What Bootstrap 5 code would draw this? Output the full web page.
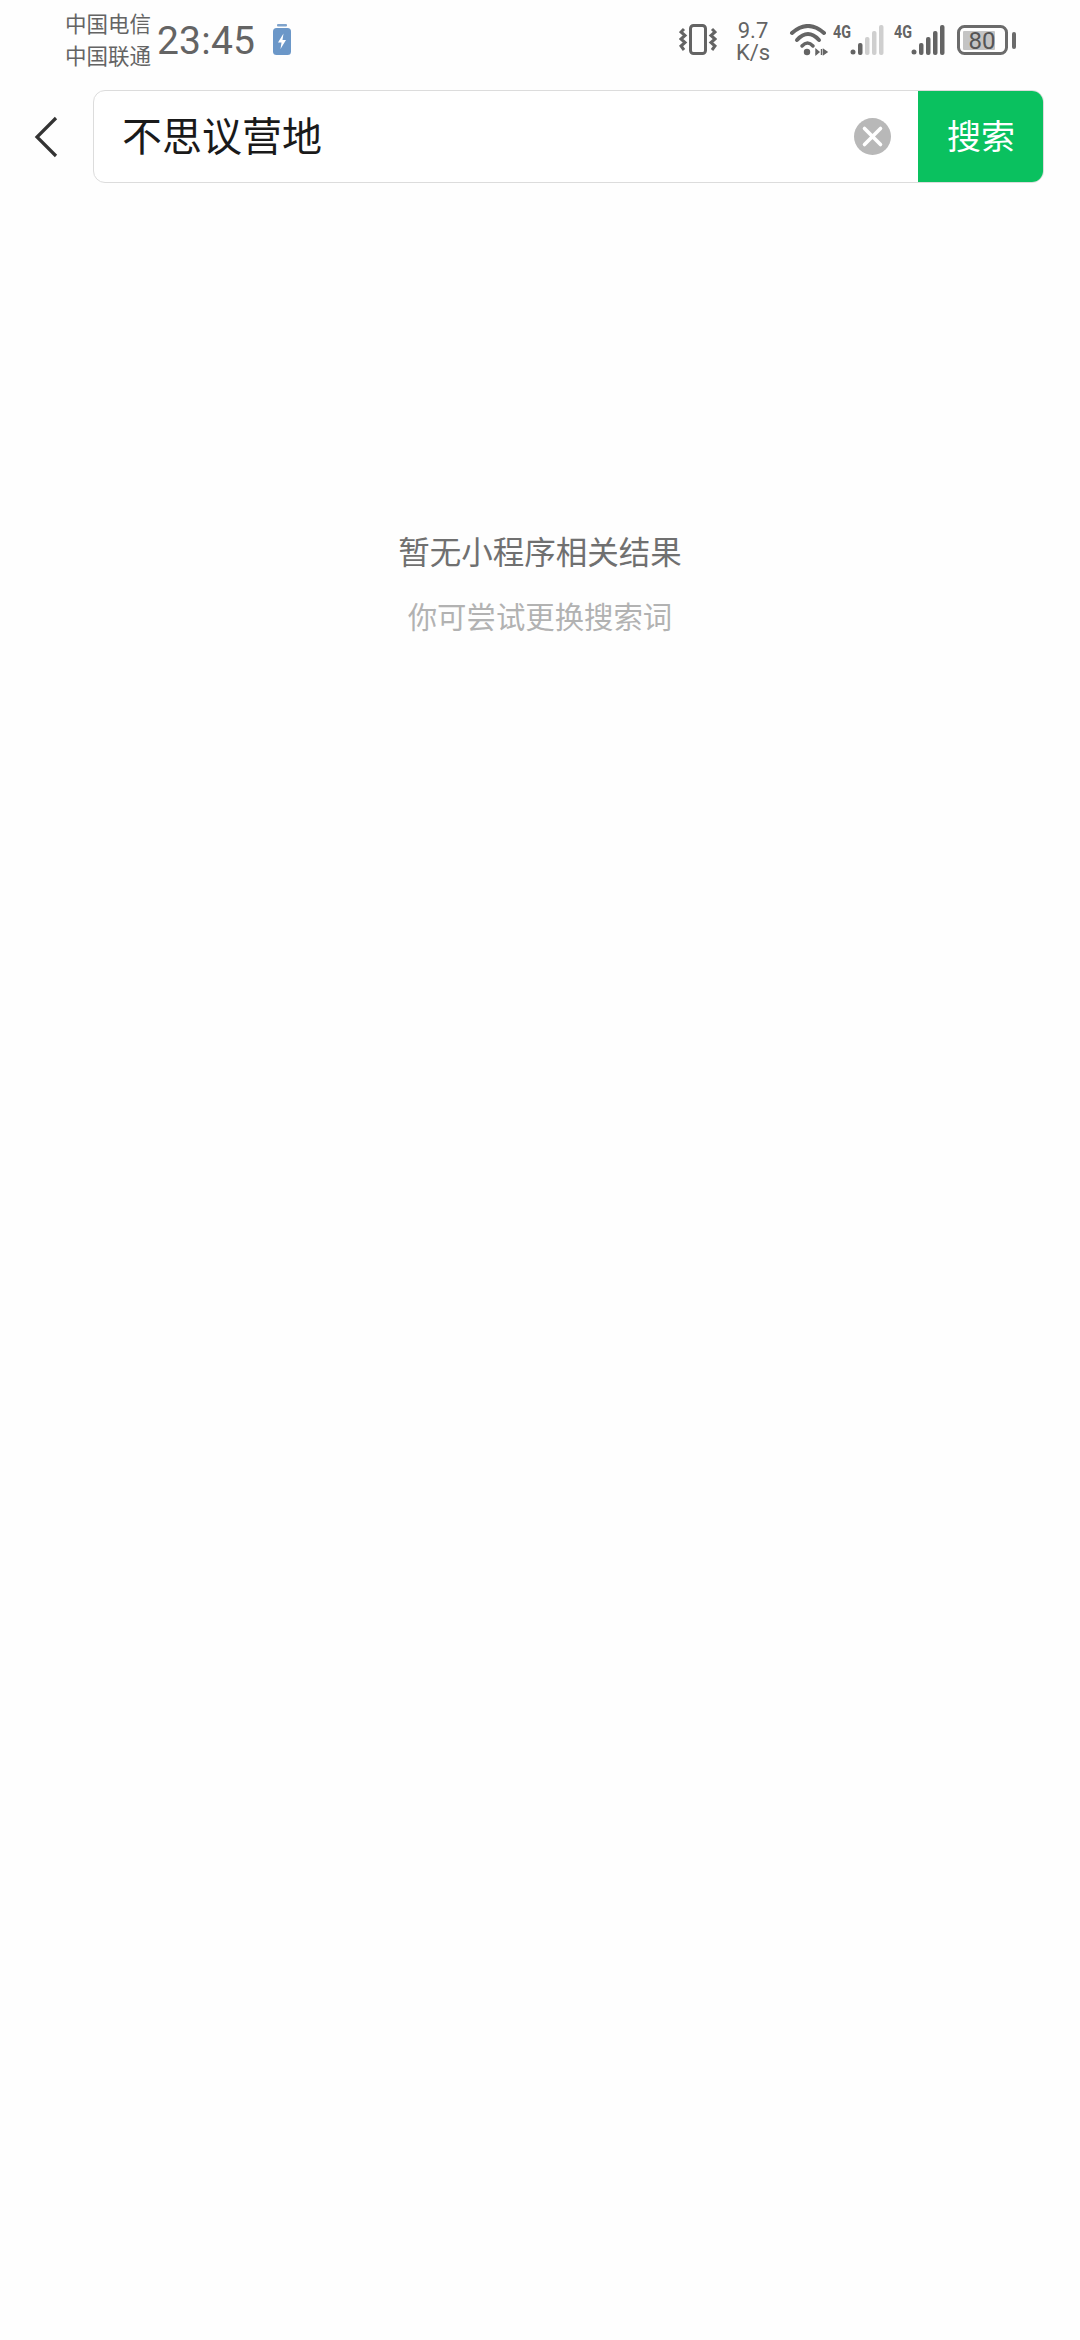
<!DOCTYPE html>
<html lang="zh-CN">
<head>
  <meta charset="UTF-8">
  <title>搜索</title>
  <link href="https://cdn.jsdelivr.net/npm/bootstrap@5.3.3/dist/css/bootstrap.min.css" rel="stylesheet">
  <style>
    body { background: #fefefe; width: 1080px; height: 2340px; overflow: hidden; font-family: Roboto, "Noto Sans CJK SC", sans-serif; }
    .status-bar { height: 80px; padding-left: 65px; padding-right: 63px; color: #646464; }
    .carrier { font-size: 21.5px; line-height: 32px; width: 92px; font-family: "Noto Sans CJK SC", sans-serif; margin-top: -2px; }
    .clock { font-size: 39px; line-height: 80px; width: 115px; letter-spacing: .2px; padding-top: 2px; }
    .net-speed { font-size: 22px; line-height: 22px; width: 44px; text-align: center; margin: 0 14px; padding-top: 3px; }
    .search-row { height: 92px; margin-top: 10px; padding-right: 36px; }
    .back-btn { width: 93px; height: 92px; padding: 2px 2px 0 0; border: 0; background: none; }
    .search-box { height: 93px; border: 1px solid #dcdcdc; border-radius: 12px; overflow: hidden; background: #fff; }
    .query { font-size: 40px; color: #1a1a1a; padding-left: 28px; padding-bottom: 5px; font-family: "Noto Sans CJK SC", sans-serif; }
    .clear-btn { margin-right: 27px; }
    .search-btn { width: 126px; height: 93px; margin: -1px -1px -1px 0; background: #0ac15f; color: #fff; font-size: 34px; border: 0; border-radius: 0; font-family: "Noto Sans CJK SC", sans-serif; padding: 0 0 4px; }
    .search-btn:hover { background: #0ac15f; color: #fff; }
    .empty-box { margin-top: 346px; font-family: "Noto Sans CJK SC", sans-serif; }
    .empty-title { font-size: 31.5px; line-height: 44px; color: #707070; }
    .empty-hint { font-size: 29.4px; line-height: 44px; color: #b2b2b2; margin-top: 21px; }
  </style>
</head>
<body>
  <div class="status-bar d-flex align-items-center">
    <div class="carrier">中国电信<br>中国联通</div>
    <div class="clock">23:45</div>
    <!-- charging -->
    <svg width="20" height="32" viewBox="0 0 20 32">
      <rect x="5" y="0" width="10" height="2.5" rx="1" fill="#7fa3cc"/>
      <rect x="1" y="4" width="18" height="27" rx="3.5" fill="#6b97c8"/>
      <path d="M11.5 9.5 L6 18.5 H9.5 L8.5 25 L14 16 H10.5 Z" fill="#fff"/>
    </svg>
    <div class="flex-grow-1"></div>
    <!-- vibrate -->
    <svg width="38" height="32" viewBox="0 0 38 32" fill="none" stroke="#646464">
      <rect x="11.5" y="1.5" width="15" height="28" rx="3" stroke-width="3"/>
      <path d="M5 5 L2 8 L6 11.5 L2 15 L6 18.5 L2 22 L5 26" stroke-width="3"/>
      <path d="M33 5 L36 8 L32 11.5 L36 15 L32 18.5 L36 22 L33 26" stroke-width="3"/>
    </svg>
    <div class="net-speed">9.7<br>K/s</div>
    <!-- wifi -->
    <svg width="40" height="32" viewBox="0 0 40 32" fill="none" stroke="#646464" stroke-width="4" stroke-linecap="round">
      <path d="M3 9 Q19 -5 35 9"/>
      <path d="M8 16 Q19 4 30 16"/>
      <path d="M13 22 Q18.5 16 24 22" stroke-width="3.5"/>
      <circle cx="18" cy="28" r="3.2" fill="#646464" stroke="none"/>
      <path d="M30 28 L27 25.5 V30.5 Z M32.5 25 V31 M34.5 25.5 L38 28 L34.5 30.5 Z" fill="#646464" stroke-width="1.4" stroke-linecap="butt"/>
    </svg>
    <!-- signal 1 -->
    <svg class="ms-1" width="61" height="44" viewBox="0 0 61 44">
      <text x="0" y="20" font-family="Roboto" font-size="18" font-weight="700" fill="#646464" textLength="18" lengthAdjust="spacingAndGlyphs">4G</text>
      <circle cx="20" cy="34" r="2.5" fill="#646464"/>
      <rect x="25" y="25" width="4.5" height="12" rx="2" fill="#646464"/>
      <rect x="32" y="19" width="4.5" height="18" rx="2" fill="#cfcfcf"/>
      <rect x="39" y="13" width="4.5" height="24" rx="2" fill="#cfcfcf"/>
      <rect x="46" y="7" width="4.5" height="30" rx="2" fill="#cfcfcf"/>
    </svg>
    <!-- signal 2 -->
    <svg width="63" height="44" viewBox="0 0 63 44">
      <text x="0" y="20" font-family="Roboto" font-size="18" font-weight="700" fill="#646464" textLength="18" lengthAdjust="spacingAndGlyphs">4G</text>
      <circle cx="20" cy="34" r="2.5" fill="#646464"/>
      <rect x="25" y="25" width="4.5" height="12" rx="2" fill="#646464"/>
      <rect x="32" y="19" width="4.5" height="18" rx="2" fill="#646464"/>
      <rect x="39" y="13" width="4.5" height="24" rx="2" fill="#646464"/>
      <rect x="46" y="7" width="4.5" height="30" rx="2" fill="#646464"/>
    </svg>
    <!-- battery -->
    <svg width="60" height="30" viewBox="0 0 60 30">
      <rect x="1.5" y="1.5" width="48" height="27" rx="6" fill="none" stroke="#6b6b6b" stroke-width="3"/>
      <rect x="6" y="6" width="32" height="19" rx="1" fill="#c4c4c4"/>
      <rect x="55" y="7" width="4" height="17" rx="2" fill="#6b6b6b"/>
      <text x="25" y="24" text-anchor="middle" font-family="Roboto" font-size="24" fill="#555">80</text>
    </svg>
  </div>

  <div class="search-row d-flex align-items-start">
    <button class="back-btn d-flex align-items-center justify-content-center" type="button" aria-label="返回">
      <svg width="24" height="42" viewBox="0 0 24 42" fill="none" stroke="#333" stroke-width="3.2"><path d="M22 2 L3 21 L22 40"/></svg>
    </button>
    <div class="search-box flex-grow-1 d-flex align-items-center">
      <div class="query flex-grow-1">不思议营地</div>
      <svg class="clear-btn" width="37" height="37" viewBox="0 0 37 37">
        <circle cx="18.5" cy="18.5" r="18.5" fill="#b8b8b8"/>
        <path d="M10.5 10.5 L26.5 26.5 M26.5 10.5 L10.5 26.5" stroke="#fff" stroke-width="3.6" stroke-linecap="round"/>
      </svg>
      <button class="btn search-btn" type="button">搜索</button>
    </div>
  </div>

  <div class="empty-box text-center">
    <div class="empty-title">暂无小程序相关结果</div>
    <div class="empty-hint">你可尝试更换搜索词</div>
  </div>
  <script src="https://cdn.jsdelivr.net/npm/bootstrap@5.3.3/dist/js/bootstrap.bundle.min.js"></script>
</body>
</html>
